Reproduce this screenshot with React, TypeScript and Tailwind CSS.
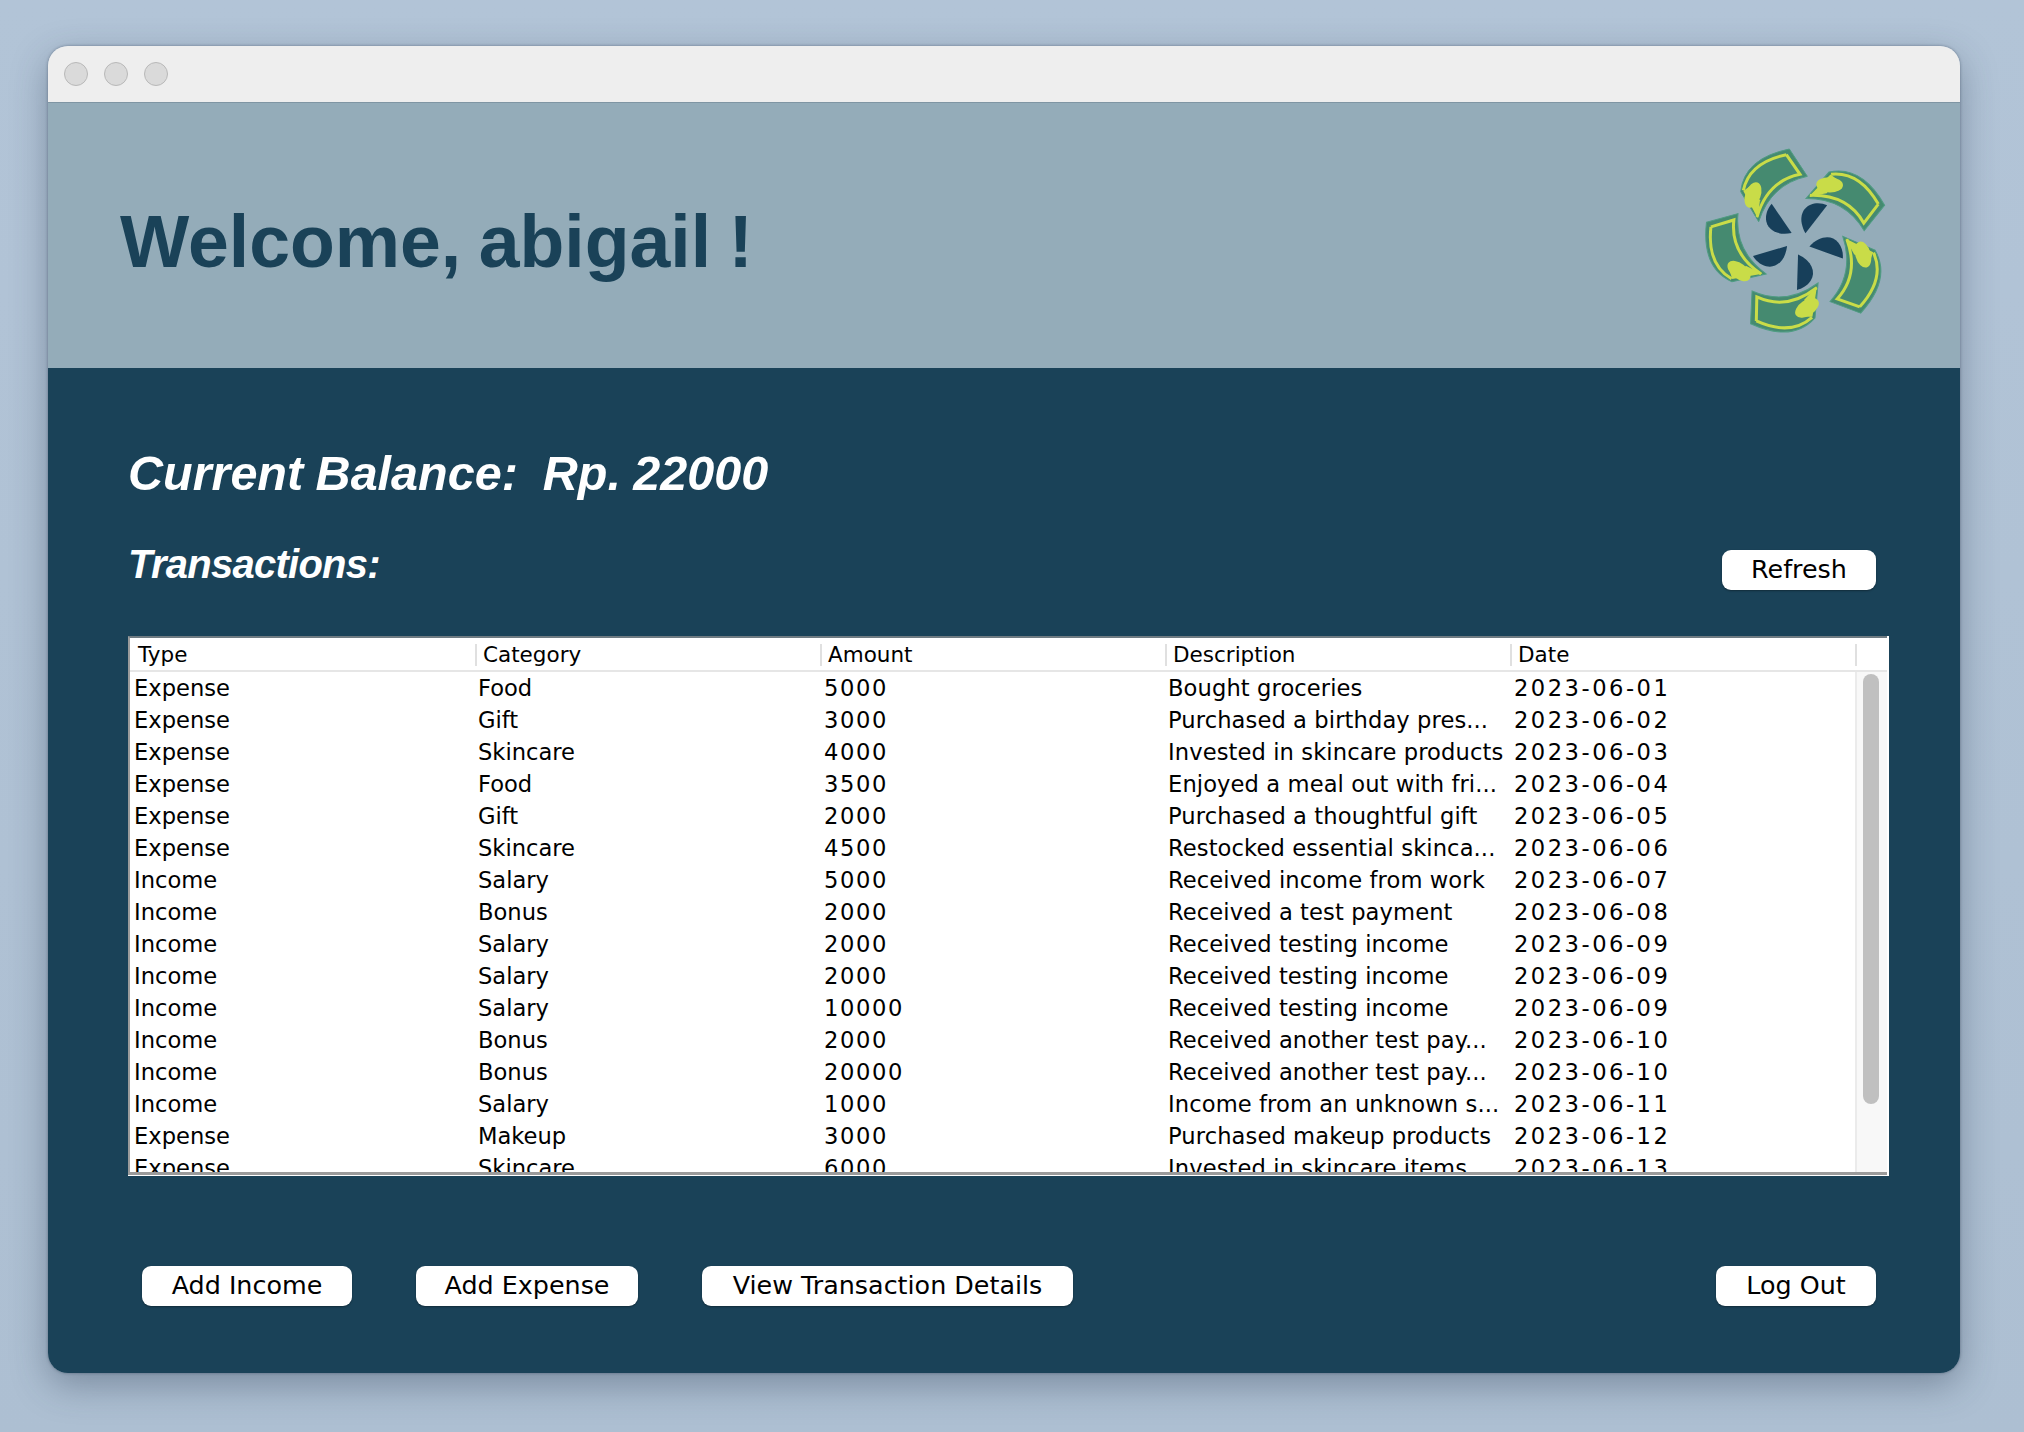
const rows = [
  ["Expense", "Food", "5000", "Bought groceries", "2023-06-01"],
  ["Expense", "Gift", "3000", "Purchased a birthday pres...", "2023-06-02"],
  ["Expense", "Skincare", "4000", "Invested in skincare products", "2023-06-03"],
  ["Expense", "Food", "3500", "Enjoyed a meal out with fri...", "2023-06-04"],
  ["Expense", "Gift", "2000", "Purchased a thoughtful gift", "2023-06-05"],
  ["Expense", "Skincare", "4500", "Restocked essential skinca...", "2023-06-06"],
  ["Income", "Salary", "5000", "Received income from work", "2023-06-07"],
  ["Income", "Bonus", "2000", "Received a test payment", "2023-06-08"],
  ["Income", "Salary", "2000", "Received testing income", "2023-06-09"],
  ["Income", "Salary", "2000", "Received testing income", "2023-06-09"],
  ["Income", "Salary", "10000", "Received testing income", "2023-06-09"],
  ["Income", "Bonus", "2000", "Received another test pay...", "2023-06-10"],
  ["Income", "Bonus", "20000", "Received another test pay...", "2023-06-10"],
  ["Income", "Salary", "1000", "Income from an unknown s...", "2023-06-11"],
  ["Expense", "Makeup", "3000", "Purchased makeup products", "2023-06-12"],
  ["Expense", "Skincare", "6000", "Invested in skincare items", "2023-06-13"],
];

const headers = ["Type", "Category", "Amount", "Description", "Date"];

function Logo() {
  const angles = [0, 72, 144, 216, 288];
  return (
    <svg width="240" height="230" viewBox="0 0 720 690" aria-label="logo">
      {angles.map((a) => (
        <g key={a} transform={`rotate(${a} 415 365)`}>
          <path d="M388 84 L442 166 Q332 190 296 302 L242 212 Q252 112 388 84 Z" fill="#458a70" stroke="#4f9c83" strokeWidth="3" />
          <path d="M379 101 L420 160 Q322 180 291 288 M379 101 Q268 124 250 208" fill="none" stroke="#c9dc48" strokeWidth="9" />
          <path d="M250 210 L270 196 L300 238 L293 292 Z" fill="#c9dc48" />
          <ellipse cx="279" cy="222" rx="23" ry="40" transform="rotate(20 279 222)" fill="#c9dc48" />
          <path d="M335 248 L395 336 C350 345 320 325 318 295 C317 275 325 260 335 248 Z" fill="#173f5a" />
        </g>
      ))}
    </svg>
  );
}

function Btn({ label, className }: { label: string; className: string }) {
  return (
    <button className={`h-10 shrink-0 rounded-[9px] bg-white text-center text-[25.4px] leading-none text-black shadow-[0_1px_2px_rgba(0,0,0,0.35)] ${className}`}>
      {label}
    </button>
  );
}

export default function App() {
  return (
    <div className="h-[1432px] w-[2024px] overflow-hidden bg-gradient-to-b from-[#b2c4d7] to-[#adbfd2] pl-[48px] pt-[46px] font-['DejaVu_Sans',sans-serif]">
      <div className="flex h-[1327px] w-[1912px] flex-col overflow-hidden rounded-[20px] shadow-[0_12px_36px_rgba(40,55,75,0.38),0_0_3px_rgba(40,55,75,0.5)]">
        <div className="flex h-[57px] shrink-0 items-center gap-4 border-b border-[#7f95a3] bg-[#eeeeee] pl-4">
          <span className="h-6 w-6 rounded-full border border-[#b8b8b8] bg-[#dadada]" />
          <span className="h-6 w-6 rounded-full border border-[#b8b8b8] bg-[#dadada]" />
          <span className="h-6 w-6 rounded-full border border-[#b8b8b8] bg-[#dadada]" />
        </div>
        <div className="flex h-[265px] shrink-0 items-center justify-between bg-[#94acb9] pl-[72px] pr-[60px]">
          <h1 className="pt-[15px] font-['Liberation_Sans',sans-serif] text-[73.4px] font-bold leading-none [word-spacing:-3px] text-[#1a4258]">Welcome, abigail !</h1>
          <Logo />
        </div>
        <div className="flex flex-1 flex-col bg-[#1a4258] pl-[80px] pr-[71px]">
          <div className="mt-[78px] whitespace-pre font-['Liberation_Sans',sans-serif] text-[48.5px] font-bold italic leading-[54px] [word-spacing:-1px] text-white">Current Balance:  Rp. 22000</div>
          <div className="mt-[44px] flex h-[52px] items-start justify-between">
            <div className="font-['Liberation_Sans',sans-serif] text-[40px] font-bold italic leading-[40px] tracking-[-0.75px] text-white">Transactions:</div>
            <Btn label="Refresh" className="mr-[13px] mt-[6px] w-[154px]" />
          </div>
          <div className="mt-[40px] h-[540px] w-[1761px] bg-white pb-px pr-[2px]">
            <div className="flex h-full flex-col border-b-[3px] border-l-[2px] border-t-[2px] border-b-[#9b9b9b] border-l-[#9b9b9b] border-t-[#6f7b82]">
              <div className="flex h-[34px] shrink-0 border-b-2 border-[#e6e6e6] pt-[6px] text-[21.5px] text-black">
                {headers.map((h, i) => (
                  <div key={h} className={`h-[22px] w-[345px] leading-[22px] ${i === 0 ? "pl-[8px]" : "border-l-2 border-[#e0e0e0] pl-[6px]"}`}>{h}</div>
                ))}
                <div className="h-[22px] border-l-2 border-[#e0e0e0]" />
              </div>
              <div className="flex min-h-0 flex-1">
                <div className="w-[1725px] shrink-0 overflow-hidden">
                  {rows.map((r, i) => (
                    <div key={i} className="flex h-8 text-[22.6px] leading-[32px] text-black">
                      {r.map((c, j) => (
                        <div key={j} className={`w-[345px] shrink-0 overflow-hidden whitespace-nowrap ${j === 0 || j === 2 || j === 4 ? "pl-[4px]" : "pl-[3px]"} ${j === 2 ? "tracking-[1.6px]" : ""} ${j === 3 ? "tracking-[0.1px]" : ""} ${j === 4 ? "tracking-[2.5px]" : ""}`}>{c}</div>
                      ))}
                    </div>
                  ))}
                </div>
                <div className="flex-1 border-l-2 border-[#ebebeb] bg-[#f8f8f8] pl-[6px] pt-[2px]">
                  <div className="h-[430px] w-4 rounded-full bg-[#c0c0c0]" />
                </div>
              </div>
            </div>
          </div>
          <div className="mt-[90px] flex pl-[14px]">
            <Btn label="Add Income" className="w-[210px]" />
            <Btn label="Add Expense" className="ml-[64px] w-[222px]" />
            <Btn label="View Transaction Details" className="ml-[64px] w-[371px]" />
            <Btn label="Log Out" className="ml-[643px] w-[160px]" />
          </div>
        </div>
      </div>
    </div>
  );
}
